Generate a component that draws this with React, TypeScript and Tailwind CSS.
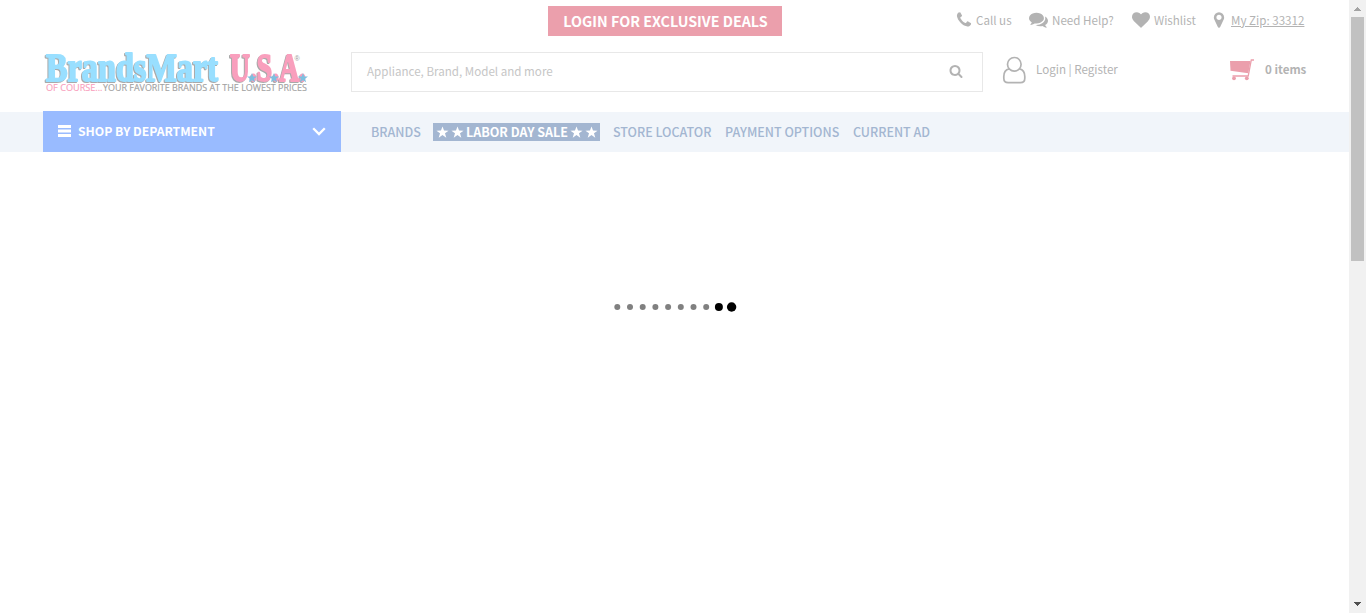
import React from "react";

const PHONE =
  "M1600 1240q0 27-10 70.5t-21 68.5q-21 50-122 106-94 51-186 51-27 0-53-3.5t-57-12.5-47-14.5-55.5-20.5-49.5-18q-98-35-175-83-127-79-264-216t-216-264q-48-77-83-175-3-9-18-49.5t-20.5-55.5-14.5-47-12.5-57-3.5-53q0-92 51-186 56-101 106-122 25-11 68.5-21t70.5-10q14 0 21 3 18 6 53 76 11 19 30 54t35 63.5 31 53.5q3 4 17.5 25t21.5 35.5 7 28.5q0 20-28.5 50t-62 55-62 53-28.5 46q0 9 5 22.5t8.5 20.5 14 24 11.5 19q76 137 174 235t235 174q2 1 19 11.5t24 14 20.5 8.5 22.5 5q18 0 46-28.5t53-62 55-62 50-28.5q14 0 28.5 7t35.5 21.5 25 17.5q25 15 53.5 31t63.5 35 54 30q70 35 76 53 3 7 3 21z";
const COMMENTS =
  "M1408 768q0 139-94 257t-256.5 186.5-353.5 68.5q-86 0-176-16-124 88-278 128-36 9-86 16h-3q-11 0-20.5-8t-11.5-21q-1-3-1-6.5t.5-6.5 2-6l2.5-5 3.5-5.5 4-5 4.5-5 4-4.5q5-6 23-25t26-29.5 22.5-29 25-38.5 20.5-44q-124-72-195-177t-71-224q0-139 94-257t256.5-186.5 353.5-68.5 353.5 68.5 256.5 186.5 94 257zm384 256q0 120-71 224.5t-195 176.5q10 24 20.5 44t25 38.5 22.5 29 26 29.5 23 25q1 1 4 4.5t4.5 5 4 5 3.5 5.5l2.5 5 2 6 .5 6.5-1 6.5q-3 14-13 22t-22 7q-50-7-86-16-154-40-278-128-90 16-176 16-271 0-472-132 58 4 88 4 161 0 309-45t264-129q125-92 192-212t67-254q0-77-23-152 129 71 204 178t75 230z";
const HEART =
  "M896 1664q-26 0-44-18l-624-602q-10-8-27.5-26t-55.5-65.5-68-97.5-53.5-121-23.5-138q0-220 127-344t351-124q62 0 126.5 21.5t120 58 95.5 68.5 76 68q36-36 76-68t95.5-68.5 120-58 126.5-21.5q224 0 351 124t127 344q0 221-229 450l-623 600q-18 18-44 18z";
const MARKER =
  "M1152 640q0-106-75-181t-181-75-181 75-75 181 75 181 181 75 181-75 75-181zm256 0q0 109-33 179l-364 774q-16 33-47.5 52t-67.5 19-67.5-19-46.5-52l-365-774q-33-70-33-179 0-212 150-362t362-150 362 150 150 362z";
const SEARCH =
  "M1216 832q0-185-131.5-316.5t-316.5-131.5-316.5 131.5-131.5 316.5 131.5 316.5 316.5 131.5 316.5-131.5 131.5-316.5zm512 832q0 52-38 90t-90 38q-54 0-90-38l-343-342q-179 124-399 124-143 0-273.5-55.5t-225-150-150-225-55.5-273.5 55.5-273.5 150-225 225-150 273.5-55.5 273.5 55.5 225 150 150 225 55.5 273.5q0 220-124 399l343 343q37 37 37 90z";

function Icon({ d, className }: { d: string; className: string }) {
  return (
    <svg viewBox="0 0 1792 1792" fill="currentColor" className={className}>
      <path d={d} />
    </svg>
  );
}

const STAR = "M0-5 1.3-1.6 5-1.6 2.1.7 3.1 4.3 0 2.2-3.1 4.3-2.1.7-5-1.6-1.3-1.6Z";

function Logo() {
  return (
    <svg width="266" height="44" viewBox="43 50 266 44" className="shrink-0 overflow-visible">
      <g
        className="[filter:drop-shadow(-1px_1px_0.4px_#a9a9a9)]"
        fontFamily="Liberation Serif, serif"
        fontWeight="bold"
        fontSize="39.500"
        strokeWidth="2"
        strokeLinejoin="round"
      >
        <text x="46" y="81" textLength="172" lengthAdjust="spacingAndGlyphs" fill="#99dfff" stroke="#99dfff">
          BrandsMart
        </text>
        <text x="230" y="81" textLength="76" lengthAdjust="spacingAndGlyphs" fill="#f99fbd" stroke="#f99fbd">
          U.S.A.
        </text>
      </g>
      {[252, 274, 303].map((x) => (
        <path key={x} d={STAR} transform={`translate(${x} 78)`} fill="#7dc0e0" />
      ))}
      <text x="294.500" y="61" fontSize="7" fontFamily="Liberation Sans, sans-serif" fill="#999">
        ®
      </text>
      <g fontFamily="Open Sans, sans-serif" fontSize="8.600" strokeWidth="0.150">
        <text x="46" y="91" textLength="56.500" lengthAdjust="spacingAndGlyphs" fill="#f99fbd" stroke="#f99fbd">
          OF COURSE...
        </text>
        <text x="103" y="91" textLength="204" lengthAdjust="spacingAndGlyphs" fill="#a3a3a3" stroke="#a3a3a3">
          YOUR FAVORITE BRANDS AT THE LOWEST PRICES
        </text>
      </g>
    </svg>
  );
}

function Star() {
  return (
    <svg viewBox="-6 -6 12 12" className="h-[13px] w-[13px] shrink-0" fill="#fff">
      <path d="M0-5.6 1.4-1.8 5.6-1.7 2.3.8 3.5 4.8 0 2.4-3.5 4.8-2.3.8-5.6-1.7-1.4-1.8Z" />
    </svg>
  );
}

function Header() {
  return (
    <header className="h-[111px]">
      <div className="flex h-[41px] items-start">
        <div className="ml-[548px] mt-[6px] flex h-[30px] w-[234px] items-center justify-center whitespace-nowrap bg-[#eb9fac] pl-[1px] text-[14.3px] font-bold leading-none text-white">
          LOGIN FOR EXCLUSIVE DEALS
        </div>
        <div className="flex h-[39px] items-center whitespace-nowrap pl-[173px] text-[11.6px] leading-[12px] text-[#b3b3b3]">
          <a className="flex w-[74px] items-center">
            <Icon d={PHONE} className="mr-[3px] h-[18px] w-[18px] shrink-0" />
            <span>Call us</span>
          </a>
          <a className="flex w-[103px] items-center">
            <Icon d={COMMENTS} className="mr-[4px] h-[19px] w-[19px] shrink-0" />
            <span>Need Help?</span>
          </a>
          <a className="flex w-[78px] items-center">
            <Icon d={HEART} className="mr-[4px] h-[18px] w-[18px] shrink-0" />
            <span>Wishlist</span>
          </a>
          <a className="flex items-center">
            <Icon d={MARKER} className="mr-[3px] h-[18px] w-[18px] shrink-0" />
            <span className="underline">My Zip: 33312</span>
          </a>
        </div>
      </div>
      <div className="flex h-[62px] items-center pl-[43px] text-[11.6px] leading-[12px] text-[#b3b3b3]">
        <Logo />
        <div className="ml-[42px] flex h-10 w-[632px] items-center justify-between border border-[#e8e8e8] pb-[2px] pl-[15px] pr-[19px] text-[#c6c6c6]">
          <span>Appliance, Brand, Model and more</span>
          <Icon d={SEARCH} className="h-[14px] w-[14px] text-[#b3b3b3]" />
        </div>
        <div className="flex items-center pb-[4px]">
          <svg className="ml-[19px] h-[28px] w-[25px] shrink-0" viewBox="0 0 25 28" fill="none" stroke="#b3b3b3" strokeWidth="1.7">
            <circle cx="12.300" cy="8.300" r="6.800" />
            <path d="M7.100 12.800C3.500 13.500 1.800 16.700 1.800 20.600v1.600c0 2.800 1.700 4.400 4.400 4.400h12.200c2.700 0 4.400-1.600 4.400-4.400v-1.600c0-3.900-1.700-7.100-5.300-7.800" />
          </svg>
          <span className="ml-[9px] w-[194px] whitespace-nowrap pb-[2px]">Login | Register</span>
          <svg className="h-[22px] w-[25px] shrink-0" viewBox="0 0 25 22" fill="#eb9fac">
            <path d="M0 2H20.500L18.300 14.300 .5 11.800Z" />
            <path d="M24 1H21.300L18.200 17H2.500" fill="none" stroke="#eb9fac" strokeWidth="1.300" />
            <circle cx="4" cy="19.300" r="1.900" />
            <circle cx="16.800" cy="19.300" r="1.900" />
          </svg>
          <span className="ml-[10px] whitespace-nowrap pb-[2px] font-bold">0 items</span>
        </div>
      </div>
    </header>
  );
}

function Nav() {
  return (
    <nav className="flex h-[41px] items-stretch bg-[linear-gradient(#fff_1px,#f1f5fa_1px)] pl-[43px] text-[12.5px] text-[#a3b6d1]">
      <div className="flex w-[298px] items-center bg-[#99bbff] pl-[15px] pr-[15px] text-[12.2px] font-bold text-white">
        <svg width="13" height="12" viewBox="0 0 13 12" fill="#fff" className="mb-px">
          <path d="M0 0h13v3H0zM0 4.500h13v3H0zM0 9h13v3H0z" />
        </svg>
        <span className="ml-[7px] flex-1 whitespace-nowrap">SHOP BY DEPARTMENT</span>
        <svg width="14" height="9" viewBox="0 0 14 9" fill="none" stroke="#fff" strokeWidth="2.300" className="mb-px">
          <path d="M1.200 1.200 7 7 12.800 1.200" />
        </svg>
      </div>
      <div className="flex items-center whitespace-nowrap pl-[30px] pt-[1px] font-medium">
        <a className="w-[62px]">BRANDS</a>
        <a className="mr-[13px] flex h-[18px] w-[167px] items-center justify-between bg-[#a3b6d1] pl-[3px] pr-[2px] font-bold text-white">
          <span className="flex gap-[2px]"><Star /><Star /></span>
          <span>LABOR DAY SALE</span>
          <span className="flex gap-[2px]"><Star /><Star /></span>
        </a>
        <a className="w-[112px]">STORE LOCATOR</a>
        <a className="w-[128px]">PAYMENT OPTIONS</a>
        <a>CURRENT AD</a>
      </div>
    </nav>
  );
}

function Loader() {
  return (
    <main className="flex flex-1 items-start pl-[613px] pt-[149px]">
      <svg width="125" height="12" viewBox="613 301 125 12">
        {Array.from({ length: 8 }, (_, i) => (
          <circle key={i} cx={617.3 + i * 12.7} cy="307" r="3" fill="#808080" />
        ))}
        <circle cx="718.900" cy="307" r="4" />
        <circle cx="731.600" cy="307" r="4.700" />
      </svg>
    </main>
  );
}

function Scrollbar() {
  return (
    <aside className="flex h-full w-[17px] shrink-0 flex-col items-center bg-[#f1f1f1]">
      <svg width="17" height="17" viewBox="0 0 17 17" fill="#a3a3a3" shapeRendering="crispEdges">
        <path d="M5 11h7L8.500 7Z" />
      </svg>
      <div className="h-[244px] w-[13px] bg-[#c1c1c1]" />
      <svg width="17" height="17" viewBox="0 0 17 17" fill="#505050" className="mt-auto" shapeRendering="crispEdges">
        <path d="M5 6h7L8.500 10Z" />
      </svg>
    </aside>
  );
}

export default function App() {
  return (
    <div className="flex h-[613px] overflow-hidden bg-white font-['Noto_Sans_CJK_SC','Noto_Sans',sans-serif] leading-none">
      <div className="flex min-w-0 flex-1 flex-col">
        <Header />
        <Nav />
        <Loader />
      </div>
      <Scrollbar />
    </div>
  );
}
